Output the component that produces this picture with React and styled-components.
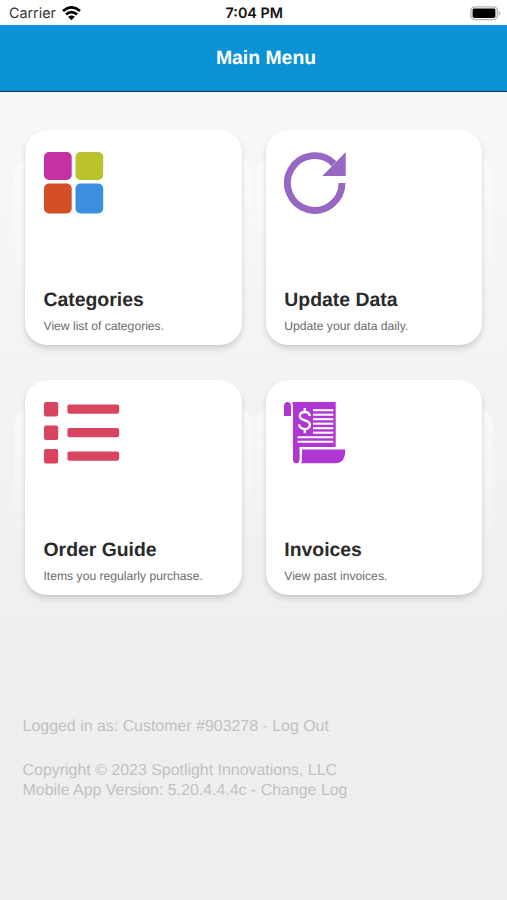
import React from 'react';
import styled, { createGlobalStyle } from 'styled-components';

const GlobalStyle = createGlobalStyle`
  *{
    box-sizing: border-box;
  }
  body{
    margin: 0;
    font-family: "Liberation Sans", Arial, sans-serif;
    text-rendering: geometricPrecision;
  }
  p,h1,h2{
    margin: 0;
  }
`

const menu = [
  {title:'Categories',text:'View list of categories.',icon:CategoriesIcon},
  {title:'Update Data',text:'Update your data daily.',icon:UpdateIcon},
  {title:'Order Guide',text:'Items you regularly purchase.',icon:GuideIcon},
  {title:'Invoices',text:'View past invoices.',icon:InvoiceIcon},
];

function WifiIcon(){
  return(
    <svg width="19" height="15" viewBox="0 0 19 15">
      <g fill="none" stroke="#000" strokeWidth="2.7">
        <path d="M1 5.1 Q9.5 -2.4 18 5.1" />
        <path d="M4 8.4 Q9.5 3.7 15 8.4" />
      </g>
      <path d="M6.1 10.8 Q9.5 8 12.9 10.8 L9.5 14.2 Z" fill="#000" />
    </svg>
  )
}

function BatteryIcon(){
  return(
    <svg width="31" height="15" viewBox="0 0 31 15">
      <rect x="0.9" y="0.9" width="26.4" height="12.7" rx="3.8" fill="#fff" stroke="#b5b5b5" strokeWidth="1.4" />
      <rect x="2.6" y="2.6" width="22.8" height="9.4" rx="1.8" fill="#000" />
      <path d="M28.6 5 Q30.4 5.6 30.4 7.2 Q30.4 8.8 28.6 9.4 Z" fill="#b5b5b5" />
    </svg>
  )
}

function CategoriesIcon(){
  return(
    <svg width="60" height="62" viewBox="0 0 60 62">
      <rect x="0" y="0" width="27.7" height="28" rx="5" fill="#c531a3" />
      <rect x="31.5" y="0" width="27.7" height="28" rx="5" fill="#bac22c" />
      <rect x="0" y="31.5" width="27.7" height="30" rx="5" fill="#d34f25" />
      <rect x="31.5" y="31.5" width="27.7" height="30" rx="5" fill="#3c8ee1" />
    </svg>
  )
}

function UpdateIcon(){
  return(
    <svg width="62" height="62" viewBox="0 0 62 62">
      <path d="M58 31 A27.3 27.3 0 1 1 50 11.7" fill="none" stroke="#9768c3" strokeWidth="6.9" />
      <path d="M61.7 0 V24 H38.3 Z" fill="#9768c3" />
    </svg>
  )
}

function GuideIcon(){
  return(
    <svg width="76" height="63" viewBox="0 0 76 63">
      {[0,23.5,47].map((y)=>(
        <g key={y} fill="#d94460">
          <rect x="0" y={y} width="14.2" height="14.4" rx="2" />
          <rect x="23.4" y={y+2.4} width="51.8" height="9.4" rx="2.2" />
        </g>
      ))}
    </svg>
  )
}

function InvoiceIcon(){
  return(
    <svg width="62" height="62" viewBox="0 0 62 62">
      <g fill="#af36d2">
        <path d="M0 14 V4 Q0.3 0 3.5 0 Q6.7 0 7 4 V14 Z" />
        <path d="M8.3 0 H51.7 V45 H15.6 V57 Q15.6 61.2 12.3 61.2 Q9 61.2 9 57 V5 Q9 2 8.3 0 Z" />
        <path d="M18 47.4 H61.2 V49 Q61.2 61.2 51 61.2 H16.8 Q18 60 18 57 Z" />
      </g>
      <g stroke="#fff" strokeWidth="2.1">
        {[8.2,12.7,17.2,21.7,26.2,30.7].map((y)=>(
          <path key={y} d={`M29 ${y} H49.3`} />
        ))}
        <path d="M13.6 35.2 H49.3 M13.6 39.7 H49.3" />
      </g>
      <path
        d="M20.8 6 V10 M20.8 26.5 V31.2 M25.8 14.2 C25.2 8.6 15.8 8.6 15.8 14 C15.8 19.6 26 17 26 22.6 C26 28.6 15.5 28.6 15.1 22.4"
        fill="none"
        stroke="#fff"
        strokeWidth="2.4"
      />
    </svg>
  )
}

function App(){
  return(
    <Container>
      <GlobalStyle />
      <StatusBar>
        <Carrier>Carrier <WifiIcon /></Carrier>
        <Time>7:04 PM</Time>
        <BatteryIcon />
      </StatusBar>
      <Header>
        <h1>Main Menu</h1>
      </Header>
      <Cards>
        {menu.map((item)=>(
          <Card key={item.title}>
            <item.icon />
            <CardText>
              <h2>{item.title}</h2>
              <p>{item.text}</p>
            </CardText>
          </Card>
        ))}
      </Cards>
      <Footer>
        <p>Logged in as: Customer #903278 - Log Out</p>
        <p>Copyright © 2023 Spotlight Innovations, LLC</p>
        <p>Mobile App Version: 5.20.4.4.4c - Change Log</p>
      </Footer>
    </Container>
  )
}
export default App;

const Container = styled.div`
  min-height: 100vh;
  isolation: isolate;
  background: linear-gradient(#f8f8f8 90px, #f3f3f3 400px, #efefef 650px, #eeeeee);
`
const StatusBar = styled.div`
  height: 25.4px;
  padding: 1px 6px 0 9px;
  display: grid;
  grid-template-columns: 1fr auto 1fr;
  align-items: center;
  background: #fff;
  font-family: Inter, sans-serif;
  color: #111;
  > svg{
    justify-self: end;
  }
`
const Carrier = styled.div`
  display: flex;
  align-items: center;
  gap: 6px;
  font-size: 14.3px;
  color: #333;
`
const Time = styled.div`
  margin-right: 1.5px;
  font-size: 14.3px;
  font-weight: 600;
`
const Header = styled.div`
  height: 67px;
  padding: 0 0 0.5px 25px;
  display: flex;
  align-items: center;
  justify-content: center;
  background: #0b93d5;
  border-bottom: 1.5px solid #15384c;
  h1{
    font-size: 19.4px;
    line-height: 22px;
    color: #fff;
  }
`
const Cards = styled.div`
  display: grid;
  grid-template-columns: 216.5px 216.5px;
  gap: 35.3px 24.3px;
  padding: 37.4px 24px 0 25px;
`
const Card = styled.div`
  position: relative;
  height: 215px;
  padding: 22.1px 18.5px 11px;
  display: flex;
  flex-direction: column;
  justify-content: space-between;
  align-items: flex-start;
  border-radius: 22px;
  background: #fff;
  box-shadow: 0 4px 6px rgba(0,0,0,0.13), 0 1px 3px rgba(0,0,0,0.05);
  /* soft light glow on both sides of the card */
  &::before{
    content: '';
    position: absolute;
    top: 26px;
    bottom: 30px;
    left: -11px;
    right: -11px;
    z-index: -1;
    border-radius: 20px;
    background: linear-gradient(rgba(255,255,255,0.6), rgba(255,255,255,0));
    filter: blur(1px);
  }
`
const CardText = styled.div`
  h2{
    font-size: 19.4px;
    line-height: 24px;
    color: #2a2a2a;
  }
  p{
    margin-top: 7.2px;
    font-size: 12.15px;
    line-height: 15px;
    color: #6b6b6b;
  }
`
const Footer = styled.div`
  padding: 122.3px 22px 0 22.6px;
  font-size: 15.93px;
  line-height: 19.6px;
  color: #c1c1c1;
  p:first-child{
    margin-bottom: 24.5px;
  }
`
